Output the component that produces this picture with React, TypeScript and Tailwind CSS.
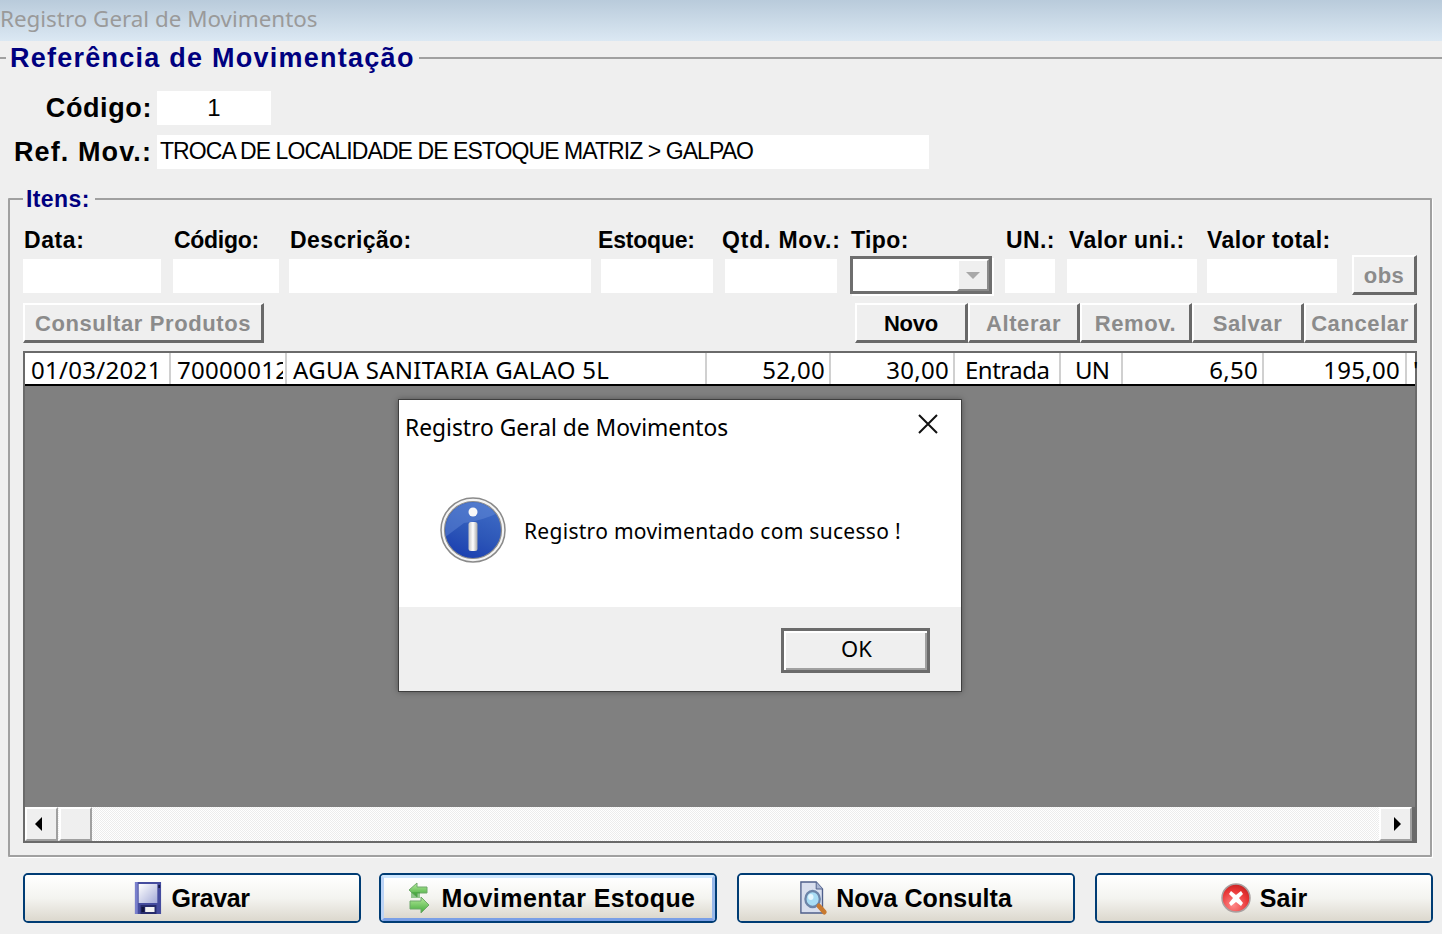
import React from "react";

const sans = "font-['Liberation_Sans',Arial,sans-serif]";
const grid = "font-['Noto_Sans',sans-serif]";

const raised =
  "flex items-center justify-center border-t-2 border-l-2 border-t-white border-l-white border-r-[3px] border-b-[3px] border-r-[#696969] border-b-[#696969] bg-[#efefef]";

const scrollBtn =
  "flex shrink-0 items-center justify-center border-t-2 border-l-2 border-t-white border-l-white border-r-2 border-b-2 border-r-[#a0a0a0] border-b-[#a0a0a0] bg-[#efefef]";

const Field = ({
  label,
  width,
  left,
  labelClass = "tracking-[0.4px]",
}: {
  label: string;
  width: string;
  left: string;
  labelClass?: string;
}) => (
  <div className={`flex flex-col ${width} ${left}`}>
    <div className={`h-[37px] text-[23px] leading-[37px] font-bold whitespace-nowrap text-black ${labelClass}`}>
      {label}
    </div>
    <div className="h-[34px] bg-white" />
  </div>
);

const ActionButton = ({ label, width, disabled = true }: { label: string; width: string; disabled?: boolean }) => (
  <div className={`${raised} ${width} h-[40px] pt-[1px] text-[22px] font-bold ${disabled ? "tracking-[0.6px] text-[#8b8b8b]" : "tracking-[-0.2px] text-black"}`}>
    {label}
  </div>
);

const Cell = ({
  children,
  width,
  extra = "pl-[6px] pr-[6px] tracking-[0.3px]",
  last = false,
}: {
  children: React.ReactNode;
  width: string;
  extra?: string;
  last?: boolean;
}) => (
  <div
    className={`${width} h-[31px] shrink-0 whitespace-nowrap pt-[3px] text-[24px] leading-[28px] text-black ${extra} ${
      last ? "" : "border-r-2 border-r-[#d0d0d0]"
    }`}
  >
    {children}
  </div>
);

const FloppyIcon = () => (
  <svg width="28" height="32" viewBox="0 0 30 32" preserveAspectRatio="none">
    <defs>
      <linearGradient id="fl" x1="0" y1="0" x2="1" y2="1">
        <stop offset="0" stopColor="#ffffff" />
        <stop offset="1" stopColor="#a4abd8" />
      </linearGradient>
    </defs>
    <path d="M1 0h28v32H1z" fill="#454c9e" />
    <path d="M1 0h3v32H1z" fill="#7a80cc" />
    <path d="M5 2h20v19H5z" fill="url(#fl)" />
    <path d="M26 3h2v3h-2z" fill="#14184a" />
    <path d="M7 23h17v9H7z" fill="#262b6c" />
    <path d="M12 25h10v5H12z" fill="#f2f2f2" />
    <path d="M8 25h3v5H8z" fill="#10133c" />
  </svg>
);

const MoveIcon = () => (
  <svg width="24" height="32" viewBox="0 0 24 32">
    <defs>
      <linearGradient id="mv" x1="0" y1="0" x2="0" y2="1">
        <stop offset="0" stopColor="#b6ec9c" />
        <stop offset="1" stopColor="#3fa838" />
      </linearGradient>
    </defs>
    <path d="M10 1 2 8l8 7v-4h10V5H10z" fill="url(#mv)" stroke="#6fa86a" strokeWidth="1" />
    <path d="M14 15l8 8-8 8v-4H3v-8h11z" fill="url(#mv)" stroke="#6fa86a" strokeWidth="1" />
    <path d="M4 10h9v6H4z" fill="#3f9e3a" opacity="0.55" />
  </svg>
);

const SearchDocIcon = () => (
  <svg width="27" height="34" viewBox="0 0 30 34" preserveAspectRatio="none">
    <path d="M1 1h17l7 7v24H1z" fill="#d9dfee" stroke="#4f5f8a" strokeWidth="1.5" />
    <path d="M18 1v7h7" fill="#aab6d2" stroke="#4f5f8a" />
    <circle cx="14" cy="18" r="8" fill="#a8dcf4" stroke="#6c84a8" strokeWidth="2.5" />
    <circle cx="12" cy="16" r="3" fill="#e6f7fe" />
    <path d="M21 25l6 6" stroke="#c87a30" strokeWidth="5" strokeLinecap="round" />
  </svg>
);

const ExitIcon = () => (
  <svg width="30" height="30" viewBox="0 0 30 30">
    <defs>
      <radialGradient id="ex" cx="0.4" cy="0.75" r="0.9">
        <stop offset="0" stopColor="#ff8a8a" />
        <stop offset="0.6" stopColor="#e83434" />
        <stop offset="1" stopColor="#b01818" />
      </radialGradient>
    </defs>
    <circle cx="15" cy="15" r="14" fill="url(#ex)" stroke="#a8a0a0" strokeWidth="1.5" />
    <path d="M10 8l5 4 5-4 2 3-4 4 4 5-2 3-5-4-5 4-2-3 4-5-4-4z" fill="#fff" />
  </svg>
);

const InfoIcon = () => (
  <svg width="66" height="66" viewBox="0 0 66 66">
    <defs>
      <linearGradient id="inf" x1="0.7" y1="0" x2="0.3" y2="1">
        <stop offset="0" stopColor="#3f6cc6" />
        <stop offset="0.55" stopColor="#2d57b8" />
        <stop offset="1" stopColor="#1b3fb0" />
      </linearGradient>
      <linearGradient id="infbar" x1="0" y1="0" x2="1" y2="0">
        <stop offset="0" stopColor="#c4c4c4" />
        <stop offset="0.5" stopColor="#ffffff" />
        <stop offset="1" stopColor="#a8a8a8" />
      </linearGradient>
      <clipPath id="infclip">
        <circle cx="33" cy="33" r="27.5" />
      </clipPath>
    </defs>
    <circle cx="33" cy="33" r="32" fill="#f4f4f4" stroke="#8a8a8a" strokeWidth="1.5" />
    <circle cx="33" cy="33" r="28.5" fill="url(#inf)" stroke="#8e8e8e" strokeWidth="1.2" />
    <path d="M0 44 24 26Q44 24 66 12V0H0z" fill="#6f93dd" opacity="0.4" clipPath="url(#infclip)" />
    <circle cx="33" cy="15" r="4.5" fill="#f8f8f8" />
    <rect x="28.5" y="25" width="9" height="29" rx="2.5" fill="url(#infbar)" />
  </svg>
);

const BottomButton = ({
  icon,
  label,
  spacing,
  focused = false,
}: {
  icon: React.ReactNode;
  label: string;
  spacing: string;
  focused?: boolean;
}) => (
  <div className="h-[50px] w-[338px] rounded-[5px] border-2 border-[#003c74]">
    <div
      className={`flex h-full items-center justify-center rounded-[3px] bg-gradient-to-b from-white via-[#f4f4f0] to-[#dcd8ce] ${
        focused
          ? "gap-[11px] border-[3px] border-t-[#cee7ff] border-l-[#bcd4f6] border-r-[#98b8ea] border-b-[#7a9fe6] pl-[6px]"
          : "gap-[9px]"
      }`}
    >
      {icon}
      <span className={`mt-[1px] text-[25px] font-bold text-black ${spacing}`}>{label}</span>
    </div>
  </div>
);

const App = () => {
  return (
    <div className={`relative h-[934px] w-[1442px] overflow-hidden bg-[#efefef] ${sans}`}>
      {/* faded title bar */}
      <div className="h-[41px] bg-gradient-to-b from-[#b9cbdb] to-[#dbe8f3] text-[22.4px] leading-[37px] text-[#9a9a9a] font-['Noto_Sans',sans-serif]">
        Registro Geral de Movimentos
      </div>

      {/* Referência de Movimentação */}
      <div className="mt-[3px] flex h-[28px] items-center">
        <div className="h-[2px] w-[6px] bg-[#a0a0a0]" />
        <div className="mx-[4px] whitespace-nowrap text-[27px] leading-[28px] font-bold tracking-[1.25px] text-[#00007f]">
          Referência de Movimentação
        </div>
        <div className="h-[2px] flex-1 bg-[#a0a0a0]" />
      </div>

      <div className="mt-[19px] flex h-[34px] items-center">
        <div className="w-[152px] text-right text-[27px] font-bold tracking-[0.6px] text-black">Código:</div>
        <div className="ml-[5px] h-full w-[114px] bg-white text-center text-[24px] leading-[33px] text-black">1</div>
      </div>
      <div className="mt-[10px] flex h-[34px] items-center">
        <div className="w-[152px] text-right text-[27px] font-bold tracking-[1.1px] whitespace-nowrap text-black">
          Ref. Mov.:
        </div>
        <div className="ml-[5px] h-full w-[772px] bg-white px-[3px] text-[23px] leading-[32px] whitespace-nowrap text-black tracking-[-0.93px]">
          TROCA DE LOCALIDADE DE ESTOQUE MATRIZ &gt; GALPAO
        </div>
      </div>

      {/* Itens */}
      <fieldset className="mt-[16px] ml-[8px] h-[672px] w-[1422px] rounded-[1px] border-2 border-[#a0a0a0] px-[13px] shadow-[1px_1px_0_#fff]">
        <legend className="pr-[5px] pl-[3px] text-[23px] leading-[28px] font-bold tracking-[0.4px] text-[#00007f]">
          Itens:
        </legend>

        <div className="mt-[9px] flex items-start">
          <Field label="Data:" width="w-[138px]" left="" labelClass="ml-[1px] tracking-[0.6px]" />
          <Field label="Código:" width="w-[106px]" left="ml-[12px]" labelClass="ml-[1px] tracking-[-0.3px]" />
          <Field label="Descrição:" width="w-[302px]" left="ml-[10px]" labelClass="ml-[1px] tracking-[0.4px]" />
          <Field label="Estoque:" width="w-[112px]" left="ml-[10px]" labelClass="-ml-[3px] tracking-[-0.2px]" />
          <Field label="Qtd. Mov.:" width="w-[112px]" left="ml-[12px]" labelClass="-ml-[3px] tracking-[0.8px]" />
          <div className="ml-[13px] flex w-[142px] flex-col">
            <div className="h-[37px] pl-[1px] text-[23px] leading-[37px] font-bold tracking-[0.4px] text-black">Tipo:</div>
            <div className="-mt-[3px] flex h-[38px] border-[3px] border-[#6e6e6e] bg-white shadow-[2px_2px_0_#fff]">
              <div className="flex-1" />
              <div className="flex w-[32px] items-center justify-center border-t-2 border-l-2 border-t-white border-l-white border-b-2 border-r-2 border-b-[#8a8a8a] border-r-[#8a8a8a] bg-[#efefef]">
                <div className="h-0 w-0 border-x-[7px] border-t-[7px] border-x-transparent border-t-[#a8a8a8]" />
              </div>
            </div>
          </div>
          <Field label="UN.:" width="w-[50px]" left="ml-[13px]" labelClass="ml-[1px] tracking-[0.4px]" />
          <Field label="Valor uni.:" width="w-[130px]" left="ml-[12px]" labelClass="ml-[2px] tracking-[0.4px]" />
          <Field label="Valor total:" width="w-[130px]" left="ml-[10px]" />
          <div className={`${raised} mt-[33px] ml-[15px] h-[40px] w-[65px] pt-[1px] text-[22px] font-bold tracking-[0.4px] text-[#8b8b8b]`}>
            obs
          </div>
        </div>

        <div className="mt-[8px] flex h-[40px] items-start">
          <ActionButton label="Consultar Produtos" width="w-[241px]" />
          <div className="flex-1" />
          <ActionButton label="Novo" width="w-[113px]" disabled={false} />
          <ActionButton label="Alterar" width="w-[112px]" />
          <ActionButton label="Remov." width="w-[112px]" />
          <ActionButton label="Salvar" width="w-[112px]" />
          <ActionButton label="Cancelar" width="w-[113px]" />
        </div>

        {/* grid */}
        <div className={`mt-[8px] flex h-[492px] w-[1394px] flex-col border-2 border-[#6a6a6a] ${grid}`}>
          <div className="flex h-[33px] shrink-0 border-b-2 border-b-black bg-white">
            <Cell width="w-[146px]">01/03/2021</Cell>
            <Cell width="w-[116px]" extra="pl-[6px] pr-[2px] tracking-[0.3px]">
              <div className="h-[28px] w-[106px] overflow-hidden">70000012</div>
            </Cell>
            <Cell width="w-[420px]">AGUA SANITARIA GALAO 5L</Cell>
            <Cell width="w-[124px]" extra="pl-[6px] pr-[4px] text-right tracking-[0.3px]">52,00</Cell>
            <Cell width="w-[124px]" extra="pl-[6px] pr-[4px] text-right tracking-[0.3px]">30,00</Cell>
            <Cell width="w-[106px]" extra="pl-[10px] tracking-[-0.5px]">Entrada</Cell>
            <Cell width="w-[62px]" extra="pl-[14px] tracking-[-0.8px]">UN</Cell>
            <Cell width="w-[141px]" extra="pl-[6px] pr-[4px] text-right tracking-[0.3px]">6,50</Cell>
            <Cell width="w-[143px]" extra="pl-[6px] pr-[5px] text-right tracking-[0.3px]">195,00</Cell>
            <Cell width="w-[10px]" extra="pl-[6px] text-[#c97a20]" last>
              '
            </Cell>
          </div>
          <div className="flex-1 bg-[#808080]" />
          <div className="flex h-[34px] shrink-0 bg-[repeating-conic-gradient(#ffffff_0_25%,#ececec_0_50%)] bg-[length:2px_2px]">
            <div className={`${scrollBtn} h-full w-[33px] pr-[6px]`}>
              <div className="h-0 w-0 border-y-[7px] border-r-[7px] border-y-transparent border-r-black" />
            </div>
            <div className={`${scrollBtn} ml-[1px] h-full w-[33px]`} />
            <div className="flex-1" />
            <div className={`${scrollBtn} h-full w-[33px] pl-[4px]`}>
              <div className="h-0 w-0 border-y-[7px] border-l-[7px] border-y-transparent border-l-black" />
            </div>
            <div className="w-[3px] bg-[#6a6a6a]" />
          </div>
        </div>
      </fieldset>

      {/* bottom buttons */}
      <div className="mt-[16px] ml-[23px] flex gap-[18px]">
        <BottomButton icon={<FloppyIcon />} label="Gravar" spacing="tracking-[-0.4px]" />
        <BottomButton icon={<MoveIcon />} label="Movimentar Estoque" spacing="tracking-[0.45px]" focused />
        <div className="ml-[2px]">
          <BottomButton icon={<SearchDocIcon />} label="Nova Consulta" spacing="tracking-[0.05px]" />
        </div>
        <div className="ml-[2px]">
          <BottomButton icon={<ExitIcon />} label="Sair" spacing="tracking-[0px]" />
        </div>
      </div>

      {/* message box */}
      <div className="absolute top-[399px] left-[398px] flex h-[293px] w-[564px] flex-col border border-[#3f3f3f] bg-white shadow-[0_0_6px_rgba(0,0,0,0.35)]">
        <div className="flex h-[207px] flex-col">
          <div className="flex items-start justify-between pt-[10px] pr-[23px] pl-[6px]">
            <span className="text-[22.8px] leading-[36px] text-black font-['Noto_Sans',sans-serif]">Registro Geral de Movimentos</span>
            <svg width="20" height="20" viewBox="0 0 20 20" className="mt-[4px]">
              <path d="M1 1l18 18M19 1 1 19" stroke="#111" strokeWidth="2" fill="none" />
            </svg>
          </div>
          <div className="mt-[51px] flex items-center pl-[41px]">
            <InfoIcon />
            <span className="mt-[4px] ml-[18px] text-[21px] tracking-[0.29px] text-black font-['Noto_Sans',sans-serif]">
              Registro movimentado com sucesso !
            </span>
          </div>
        </div>
        <div className="flex flex-1 justify-end bg-[#efefef] pt-[21px] pr-[31px]">
          <div className="flex h-[45px] w-[149px] items-center justify-center border-[3px] border-[#6b6b6b] bg-[#efefef] pb-[4px] pl-[2px] text-[22px] text-black shadow-[inset_2px_2px_0_#fff,inset_-2px_-2px_0_#a0a0a0] font-['Noto_Sans',sans-serif]">
            OK
          </div>
        </div>
      </div>
    </div>
  );
};

export default App;
